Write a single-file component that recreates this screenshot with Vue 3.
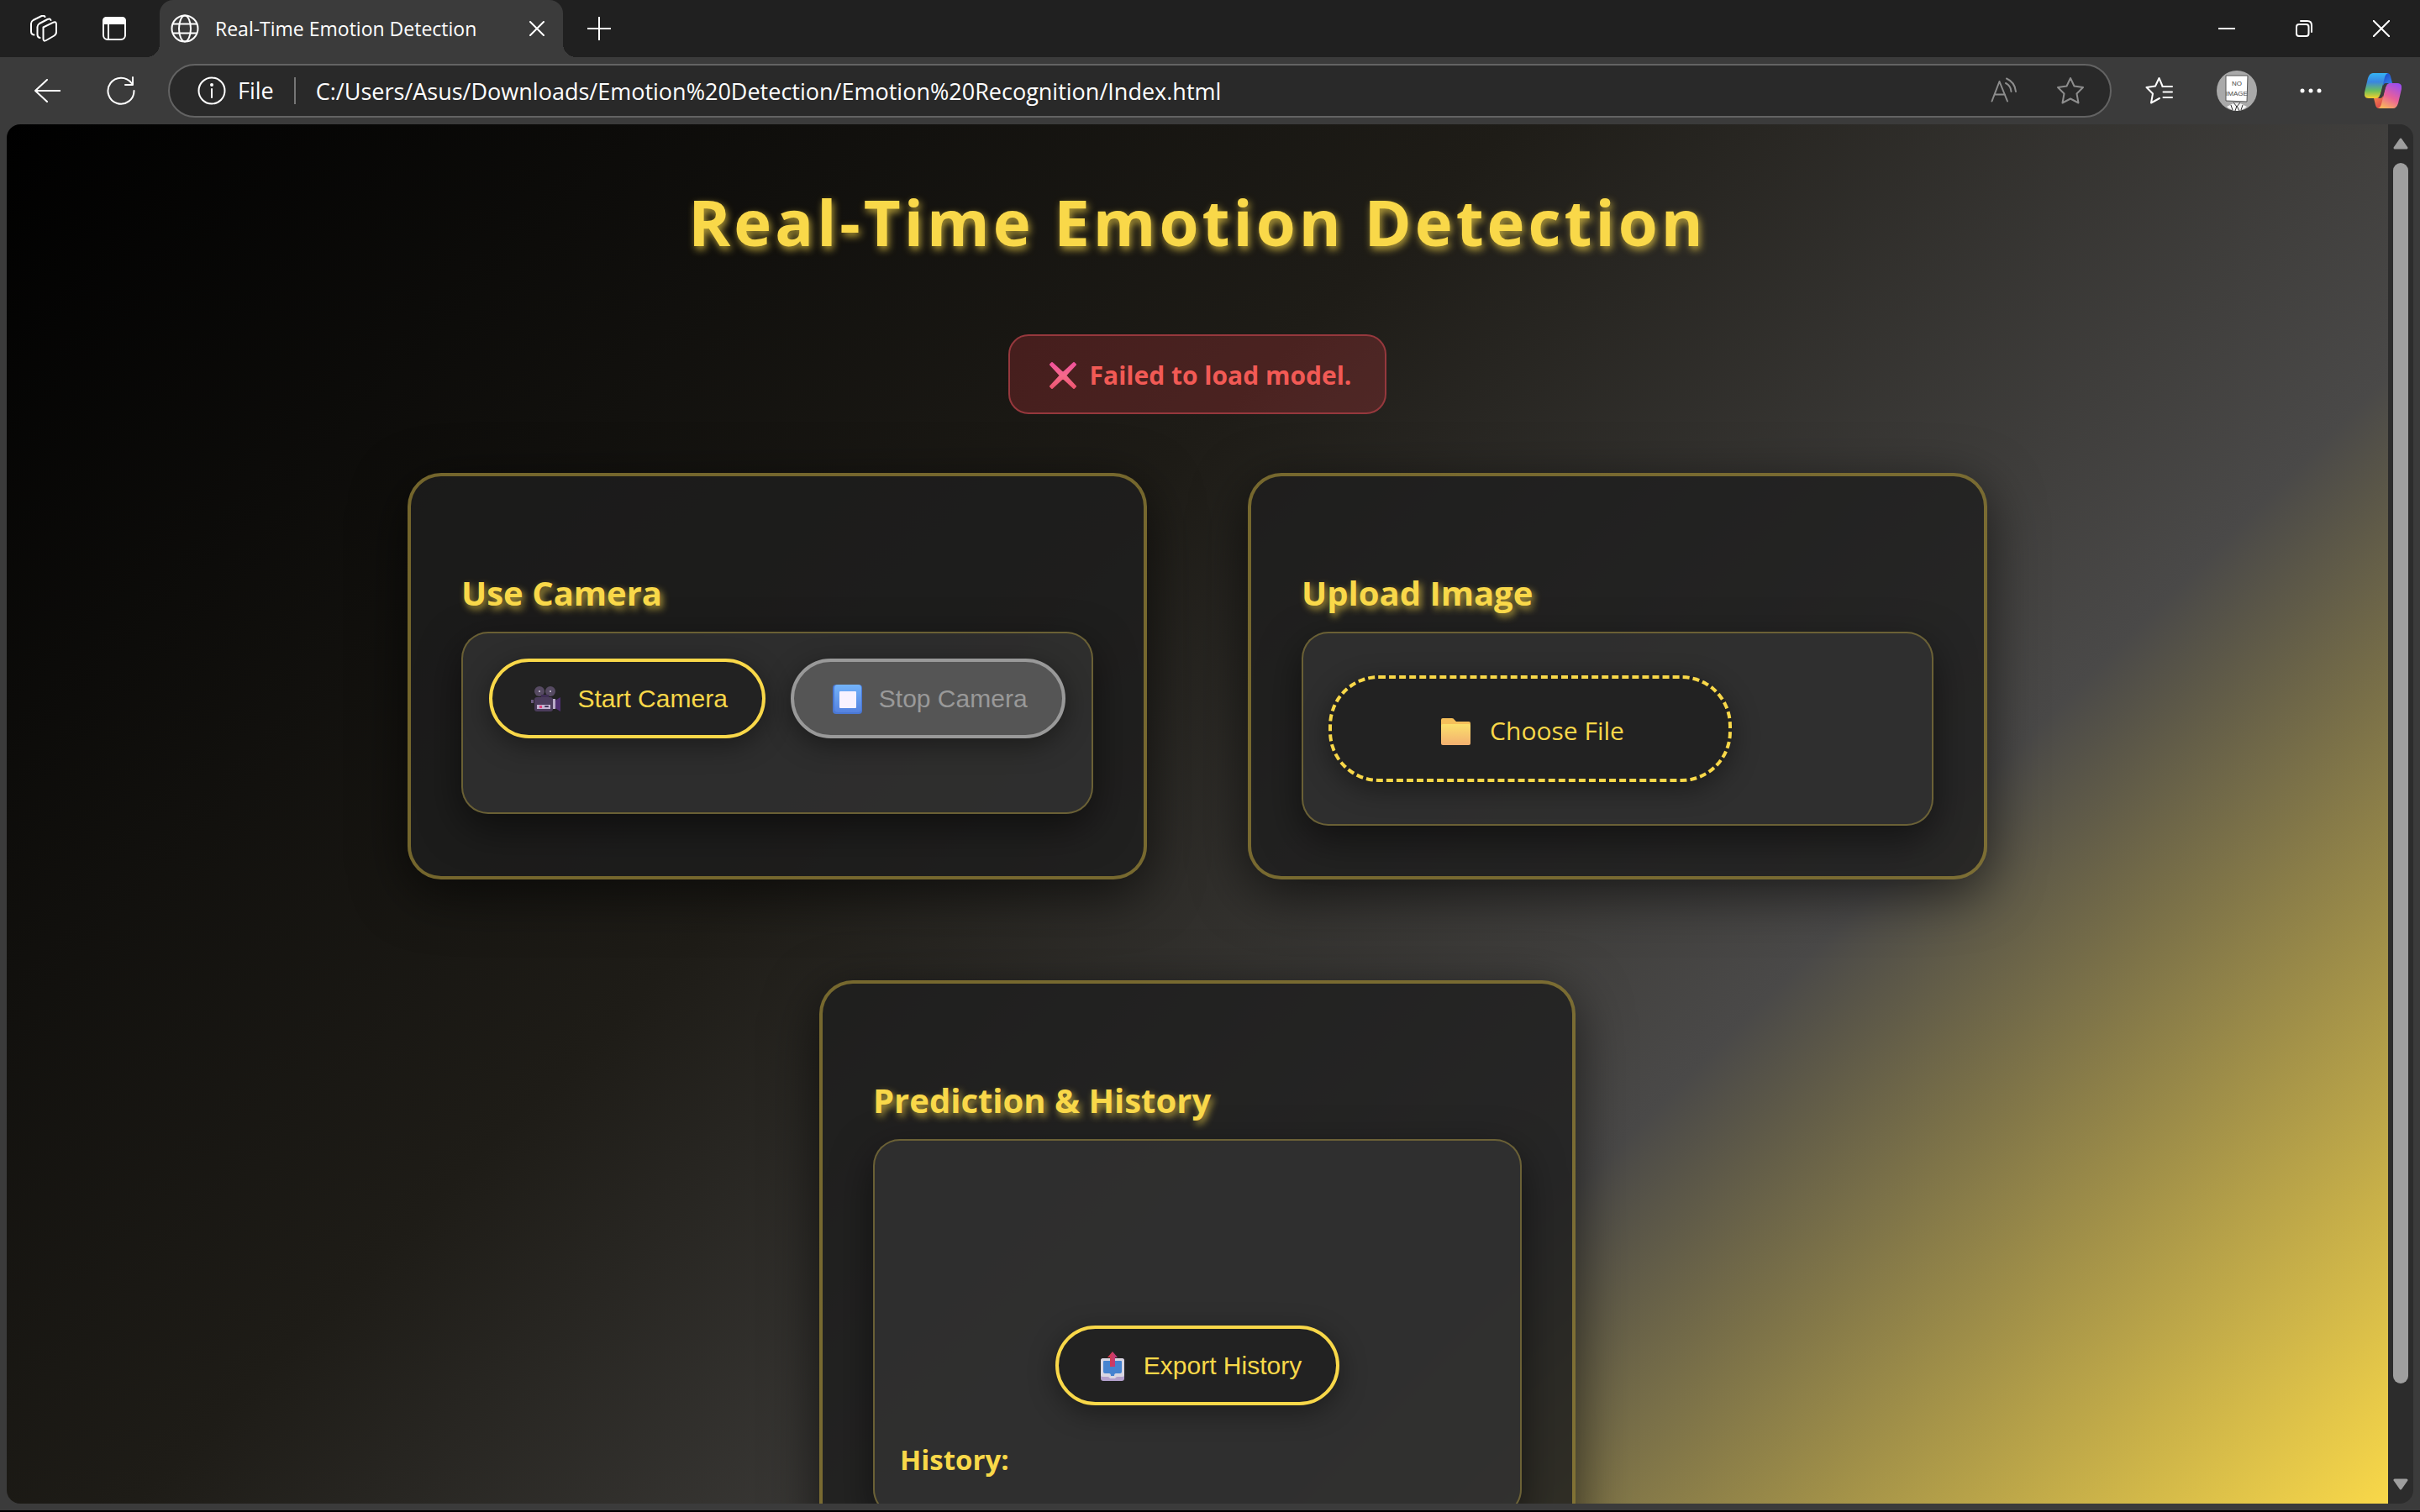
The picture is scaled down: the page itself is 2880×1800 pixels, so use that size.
<script setup>
import { ref } from 'vue'

const address = ref('C:/Users/Asus/Downloads/Emotion%20Detection/Emotion%20Recognition/Index.html')
</script>

<template>
  <div class="window">
    <header class="tabstrip">
      <button class="icon-btn workspaces" aria-label="Workspaces">
        <svg width="32" height="32" viewBox="0 0 32 32" class="line">
          <path d="M15.500 14.500 L27 8.800 Q31 7 31 11 V20 Q31 23 28.500 24.500 L19 30 Q15.500 32 15.500 28 Z" />
          <path d="M11.500 27 Q8.500 26.500 8.500 23 V14 Q8.500 11.500 11 10 L20.500 5 Q23.500 3.500 24.500 6" />
          <path d="M4.500 23.500 Q1 23 1 19.500 V10 Q1 7.500 3.500 6 L13.500 1 Q16.500 0 17.500 2" />
        </svg>
      </button>
      <button class="icon-btn tabs-menu" aria-label="Tab actions">
        <svg width="28" height="28" viewBox="0 0 28 28" class="line">
          <rect x="1" y="1" width="26" height="26" rx="5" />
          <path d="M1 8 V5 Q1 1 5 1 H23 Q27 1 27 5 V8 Z" fill="#fff" />
          <path d="M7 8 V27" />
        </svg>
      </button>
      <div class="tab">
        <svg width="34" height="34" viewBox="0 0 34 34" class="line">
          <circle cx="17" cy="17" r="15.500" />
          <ellipse cx="17" cy="17" rx="7" ry="15.500" />
          <path d="M3.500 11.500 H30.500 M3.500 22.500 H30.500" />
        </svg>
        <span class="tab-title">Real-Time Emotion Detection</span>
        <button class="icon-btn" aria-label="Close tab">
          <svg width="18" height="18" viewBox="0 0 18 18" class="line"><path d="M1 1 L17 17 M17 1 L1 17" /></svg>
        </button>
      </div>
      <button class="icon-btn new-tab" aria-label="New tab">
        <svg width="28" height="28" viewBox="0 0 28 28" class="line"><path d="M14 0 V28 M0 14 H28" /></svg>
      </button>
      <div class="window-controls">
        <button class="icon-btn" aria-label="Minimize">
          <svg width="20" height="20" viewBox="0 0 20 20" class="line"><path d="M0 10 H20" /></svg>
        </button>
        <button class="icon-btn" aria-label="Restore">
          <svg width="20" height="20" viewBox="0 0 20 20" class="line">
            <rect x="1" y="5" width="14.500" height="14" rx="3" />
            <path d="M6 1 H14 Q19 1 19 6 V14" />
          </svg>
        </button>
        <button class="icon-btn" aria-label="Close">
          <svg width="20" height="20" viewBox="0 0 20 20" class="line"><path d="M0.500 0.500 L19.500 19.500 M19.500 0.500 L0.500 19.500" /></svg>
        </button>
      </div>
    </header>

    <nav class="toolbar">
      <button class="icon-btn back" aria-label="Back">
        <svg width="32" height="28" viewBox="0 0 32 28" class="line"><path d="M32 14 H2 M16 1 L2 14 L16 27" /></svg>
      </button>
      <button class="icon-btn refresh" aria-label="Refresh">
        <svg width="34" height="34" viewBox="0 0 34 34" class="line"><path d="M32.500 17 A15.500 15.500 0 1 1 29.500 8 M31 1 V10 H22" /></svg>
      </button>
      <div class="address">
        <svg width="34" height="34" viewBox="0 0 34 34" class="line">
          <circle cx="17" cy="17" r="15.500" />
          <path d="M17 15 V25" />
          <circle cx="17" cy="10" r="1" fill="#fff" />
        </svg>
        <span class="scheme">File</span>
        <input v-model="address" class="url" type="text" aria-label="Address" spellcheck="false" />
        <button class="icon-btn dim" aria-label="Read aloud">
          <svg width="32" height="32" viewBox="0 0 32 32" class="line">
            <path d="M1.500 28.500 L10.500 5 L20 28.500 M4.500 20.500 H17" />
            <path d="M19 1.500 Q29 6 30 17 M18 7 Q24 10 24.500 17" />
          </svg>
        </button>
        <button class="icon-btn dim" aria-label="Add to favorites">
          <svg width="34" height="34" viewBox="0 0 34 34" class="line">
            <path d="M17 2 L21.500 11.500 L32 13 L24.500 20.500 L26.500 31.500 L17 26.500 L7.500 31.500 L9.500 20.500 L2 13 L12.500 11.500 Z" />
          </svg>
        </button>
      </div>
      <div class="tools">
        <button class="icon-btn" aria-label="Favorites">
          <svg width="34" height="34" viewBox="0 0 34 34" class="line">
            <path d="M20.500 11.500 L16.500 2 L12 11.500 L1.500 13 L9 20.500 L7 31.500 L17 26" />
            <path d="M20.500 12 H32 M21.500 18.500 H32 M21.500 25 H32" />
          </svg>
        </button>
        <button class="avatar" aria-label="Profile">
          <svg width="48" height="48" viewBox="0 0 48 48">
            <circle cx="24" cy="24" r="24" fill="#a9a9a9" />
            <path d="M12 43 L20 39 H28 L36 43 Q30 48 24 48 Q18 48 12 43 Z" fill="#f4f4f4" />
            <path d="M20 38 L24 43 L28 38 M24 42 L22 48 M24 42 L27 48 M17 41 L19 47 M31 41 L29 47" fill="none" stroke="#333" stroke-width="1" />
            <path d="M11 6 H37 L36 37 L11 36 Z" fill="#fff" stroke="#555" stroke-width="1" />
            <text x="24" y="18" class="avatar-text">NO</text>
            <text x="24" y="30" class="avatar-text">IMAGE</text>
          </svg>
        </button>
        <button class="icon-btn" aria-label="Settings and more">
          <svg width="26" height="6" viewBox="0 0 26 6" fill="#fff"><circle cx="3" cy="3" r="2.500" /><circle cx="13" cy="3" r="2.500" /><circle cx="23" cy="3" r="2.500" /></svg>
        </button>
        <button class="icon-btn" aria-label="Copilot">
          <svg width="44" height="42" viewBox="0 0 44 42">
            <defs>
              <linearGradient id="cpA" x1="0" y1="0" x2="0" y2="1"><stop offset="0" stop-color="#35b4f4" /><stop offset=".35" stop-color="#3a86e0" /><stop offset=".7" stop-color="#6cbf5c" /><stop offset="1" stop-color="#f5d02c" /></linearGradient>
              <linearGradient id="cpB" x1="0.800" y1="0" x2="0.300" y2="1"><stop offset="0" stop-color="#9a4df0" /><stop offset=".55" stop-color="#e8609a" /><stop offset="1" stop-color="#f9b45c" /></linearGradient>
              <linearGradient id="cpC" x1="0" y1="0" x2="1" y2="1"><stop offset="0" stop-color="#1a3fc4" /><stop offset="1" stop-color="#3f9bf5" /></linearGradient>
              <linearGradient id="cpD" x1="0" y1="0" x2="1" y2="1"><stop offset="0" stop-color="#fb9a4c" /><stop offset="1" stop-color="#d83a4c" /></linearGradient>
            </defs>
            <path d="M20 0 H27 Q30 0 31 4 L33 12 H40 L22 15 Z" fill="url(#cpC)" />
            <path d="M24 42 H17 Q14 42 13 38 L11 30 H4 L22 27 Z" fill="url(#cpD)" />
            <path d="M10 0 H28 Q25 1 24 5 L19 25 Q17 30 13 30 H5 Q-1 30 0 23 L4 6 Q6 0 10 0 Z" fill="url(#cpA)" />
            <path d="M34 42 H16 Q19 41 20 37 L25 17 Q27 12 31 12 H39 Q45 12 44 19 L40 36 Q38 42 34 42 Z" fill="url(#cpB)" />
            <path d="M25 12 H29 Q26 13 25 17 L22 27 Q21 30 18 30 H16 Q18 29 19 25 L22 15 Q23 12 25 12 Z" fill="#3b3b3b" />
          </svg>
        </button>
      </div>
    </nav>

    <div class="viewport">
      <main class="page">
        <h1>Real-Time Emotion Detection</h1>

        <p class="alert" role="alert">
          <svg width="34" height="34" viewBox="0 0 34 34">
            <defs><linearGradient id="cross" x1="0" y1="0" x2="0" y2="1"><stop offset="0" stop-color="#f0509a" /><stop offset=".5" stop-color="#f56a8c" /><stop offset="1" stop-color="#ee5570" /></linearGradient></defs>
            <path d="M4 2 L17 14 L30 2 L32 4 L20 17 L32 30 L30 32 L17 20 L4 32 L2 30 L14 17 L2 4 Z" fill="url(#cross)" stroke="url(#cross)" stroke-width="2" stroke-linejoin="round" />
          </svg>
          <span>Failed to load model.</span>
        </p>

        <div class="cards">
          <section class="card">
            <h2>Use Camera</h2>
            <div class="panel camera-panel">
              <button class="pill">
                <svg width="36" height="36" viewBox="0 0 36 36">
                  <path d="M3 23 H0 V19 H3 Z" fill="#6b5a80" />
                  <path d="M27 21 L35 16 V33 L27 28 Z" fill="#4f2f72" />
                  <circle cx="10" cy="9" r="6" fill="#564a62" /><circle cx="23" cy="9" r="6" fill="#564a62" />
                  <circle cx="10" cy="9" r="1" fill="#d8d0e4" /><circle cx="23" cy="9" r="1" fill="#d8d0e4" />
                  <rect x="12" y="13" width="9" height="4" fill="#3f2e55" />
                  <rect x="4" y="16" width="22" height="17" rx="3" fill="#4b3c5c" />
                  <path d="M26 18 H29 V30 H26 Z" fill="#b9abc9" />
                  <rect x="7" y="25" width="16" height="5" fill="#c3b3d2" />
                  <rect x="10" y="26" width="3" height="3" fill="#e0407c" />
                  <rect x="16" y="26" width="5" height="2" rx="1" fill="#42355a" />
                </svg>
                <span>Start Camera</span>
              </button>
              <button class="pill" disabled>
                <svg width="36" height="36" viewBox="0 -1 36 36">
                  <defs><linearGradient id="stop" x1="0" y1="0" x2="0" y2="1"><stop offset="0" stop-color="#73b4fa" /><stop offset="1" stop-color="#5582e0" /></linearGradient></defs>
                  <rect x="0" y="0" width="35" height="35" rx="4" fill="#4a78d4" />
                  <rect x="2" y="0" width="32" height="33" rx="4" fill="url(#stop)" />
                  <rect x="8" y="8" width="20" height="20" rx="1" fill="#f8f2ff" />
                </svg>
                <span>Stop Camera</span>
              </button>
            </div>
          </section>

          <section class="card">
            <h2>Upload Image</h2>
            <div class="panel upload-panel">
              <label class="file-drop" for="image-file">
                <svg width="36" height="36" viewBox="0 0 36 36">
                  <defs><linearGradient id="folder" x1="0" y1="0" x2="0" y2="1"><stop offset="0" stop-color="#fbe06c" /><stop offset="1" stop-color="#f3b070" /></linearGradient></defs>
                  <path d="M0 14 V5 Q0 3 2 3 H13 Q15 3 16 5 L18 7 H33 Q35 7 35 9 V14 Z" fill="#f5bf5a" />
                  <rect x="0" y="10" width="35" height="25" rx="2" fill="url(#folder)" />
                </svg>
                <span>Choose File</span>
              </label>
              <input id="image-file" class="file-input" type="file" accept="image/*" />
            </div>
          </section>

          <section class="card wide">
            <h2>Prediction &amp; History</h2>
            <div class="panel history-panel">
              <button class="pill export">
                <svg width="36" height="36" viewBox="0 0 36 36">
                  <defs><linearGradient id="arrow" x1="0" y1="0" x2="1" y2="0"><stop offset="0" stop-color="#e03a3e" /><stop offset="1" stop-color="#b83c8c" /></linearGradient></defs>
                  <rect x="4" y="9" width="28" height="27" rx="3" fill="#b3a0cc" />
                  <path d="M4 12 Q4 9 7 9 H29 Q32 9 32 12 V29 Q32 31 30 31 H24 Q22 31 21 33 H15 Q14 31 12 31 H6 Q4 31 4 29 Z" fill="#d9d6e2" />
                  <path d="M7 13 Q7 12 8 12 H28 Q29 12 29 13 V25 Q29 27 27 27 H22 Q20 27 20 30 H16 Q16 27 14 27 H9 Q7 27 7 25 Z" fill="#4683d0" />
                  <path d="M18 1 L24 8 H21 V19 H15 V8 H12 Z" fill="url(#arrow)" />
                </svg>
                <span>Export History</span>
              </button>
              <h3>History:</h3>
            </div>
          </section>
        </div>
      </main>
      <div class="scrollbar" aria-hidden="true">
        <svg width="18" height="14" viewBox="0 0 18 14"><path d="M9 2 L16 12 H2 Z" /></svg>
        <div class="track"><div class="thumb"></div></div>
        <svg width="18" height="14" viewBox="0 0 18 14"><path d="M9 12 L2 2 H16 Z" /></svg>
      </div>
    </div>
  </div>
</template>

<style>
body {
  background: #000;
}
</style>

<style scoped>
* {
  box-sizing: border-box;
}

.window {
  --ui: "Segoe UI", "Open Sans", "Noto Sans", sans-serif;
  --gold: #f9d849;
  display: flex;
  flex-direction: column;
  height: 100vh;
  border-bottom: 2px solid #000;
  background: #3b3b3b;
  color: #fff;
  font-family: var(--ui);
  overflow: hidden;
}

svg {
  display: block;
  flex: none;
}

.line {
  fill: none;
  stroke: currentColor;
  stroke-width: 2;
  stroke-linecap: round;
  stroke-linejoin: round;
}

.icon-btn,
.avatar {
  display: flex;
  padding: 0;
  border: 0;
  background: none;
  color: #fff;
}

/* Tab strip */
.tabstrip {
  display: flex;
  align-items: center;
  height: 68px;
  background: #202020;
}

.workspaces {
  margin-left: 36px;
}

.tabs-menu {
  margin-left: 54px;
}

.tab {
  position: relative;
  display: flex;
  align-items: center;
  width: 480px;
  height: 68px;
  margin-left: 40px;
  padding: 0 22px 0 13px;
  border-radius: 16px 16px 0 0;
  background: #3b3b3b;
}

.tab::before,
.tab::after {
  content: "";
  position: absolute;
  bottom: 0;
  width: 16px;
  height: 16px;
}

.tab::before {
  right: 100%;
  background: radial-gradient(circle at 0 0, #202020 16px, #3b3b3b 16px);
}

.tab::after {
  left: 100%;
  background: radial-gradient(circle at 100% 0, #202020 16px, #3b3b3b 16px);
}

.tab-title {
  flex: 1;
  margin-left: 19px;
  font-size: 23px;
  line-height: 32px;
  white-space: nowrap;
}

.new-tab {
  margin-left: 29px;
}

.window-controls {
  display: flex;
  gap: 72px;
  margin-left: auto;
  margin-right: 36px;
}

/* Toolbar */
.toolbar {
  display: flex;
  align-items: center;
  height: 80px;
}

.back {
  margin-left: 40px;
}

.refresh {
  margin-left: 55px;
}

.address {
  display: flex;
  flex: 1;
  align-items: center;
  height: 64px;
  margin-left: 39px;
  padding: 0 30px 0 33px;
  border: 2px solid #636363;
  border-radius: 32px;
  background: #292929;
}

.scheme {
  margin-left: 14px;
  padding-right: 24px;
  border-right: 2px solid #757575;
  font-size: 27px;
  line-height: 32px;
}

.url {
  flex: 1;
  min-width: 0;
  height: 40px;
  margin: 0 24px;
  padding: 0;
  border: 0;
  background: none;
  color: #fff;
  font-family: var(--ui);
  font-size: 27px;
  outline: none;
}

.dim {
  margin-left: 46px;
  color: #8d8d8d;
}

.tools {
  display: flex;
  align-items: center;
  gap: 51px;
  margin: 0 22px 0 40px;
}

.avatar-text {
  fill: #444;
  font-family: "Liberation Sans", sans-serif;
  font-size: 8px;
  text-anchor: middle;
}

/* Browser viewport */
.viewport {
  display: flex;
  flex: 1;
  min-height: 0;
  margin: 0 8px 8px;
  border-radius: 16px;
  overflow: hidden;
}

.page {
  flex: 1;
  padding: 58px 60px 0;
  background: linear-gradient(135deg, #000 0%, #1e1c17 40%, #4a4948 70%, #f9d849 100%);
  color: var(--gold);
  overflow: hidden;
}

h1 {
  margin: 0;
  font-size: 76px;
  line-height: 116px;
  letter-spacing: 4px;
  text-align: center;
  text-shadow: 2px 4px 10px rgba(249, 216, 73, 0.7);
}

.alert {
  display: flex;
  align-items: center;
  gap: 15px;
  width: fit-content;
  height: 95px;
  margin: 76px auto 70px;
  padding: 2px 40px 0 46px;
  border: 2px solid #96383d;
  border-radius: 24px;
  background: rgba(230, 57, 70, 0.22);
  color: #f25a55;
  font-size: 30px;
  font-weight: 700;
}

.cards {
  display: flex;
  flex-wrap: wrap;
  justify-content: center;
  gap: 120px;
  max-width: 2200px;
  margin: 0 auto;
}

.card {
  flex: 0 1 880px;
  padding: 110px 60px 60px;
  border: 4px solid rgba(249, 216, 73, 0.4);
  border-radius: 40px;
  background: rgba(30, 30, 30, 0.8);
  box-shadow: 0 16px 64px rgba(0, 0, 0, 0.6);
}

.wide {
  flex-basis: 900px;
}

h2 {
  margin: 0 0 18px;
  font-size: 40px;
  line-height: 57px;
  text-shadow: 3px 4px 8px rgba(249, 216, 73, 0.7);
}

.panel {
  padding: 30px;
  border: 2px solid rgba(249, 216, 73, 0.3);
  border-radius: 32px;
  background: rgba(50, 50, 50, 0.8);
  box-shadow: 0 16px 48px rgba(0, 0, 0, 0.5);
}

.camera-panel {
  display: flex;
  justify-content: center;
  gap: 30px;
  padding: 30px 24px 88px;
}

.upload-panel {
  padding: 50px 30px;
}

.history-panel {
  padding-top: 220px;
  padding-bottom: 40px;
}

.pill {
  display: flex;
  align-items: center;
  gap: 19px;
  height: 95px;
  padding: 0 41px 0 46px;
  border: 4px solid var(--gold);
  border-radius: 48px;
  background: #222;
  box-shadow: 0 8px 32px rgba(0, 0, 0, 0.4);
  color: var(--gold);
  font-family: "Liberation Sans", Arial, sans-serif;
  font-size: 30px;
  white-space: nowrap;
}

.pill:disabled {
  border-color: #999;
  background: #555;
  color: #999;
}

.export {
  margin: 0 auto;
}

.file-drop {
  display: flex;
  align-items: center;
  justify-content: center;
  gap: 22px;
  width: 480px;
  max-width: 100%;
  height: 127px;
  padding: 4px 0 0 6px;
  border: 4px dashed var(--gold);
  border-radius: 60px;
  background: #222;
  box-shadow: 0 8px 32px rgba(0, 0, 0, 0.4);
  font-size: 30px;
}

.file-input {
  display: none;
}

h3 {
  margin: 40px 0 0;
  font-size: 33px;
  line-height: 50px;
}

.scrollbar {
  display: flex;
  flex-direction: column;
  align-items: center;
  width: 30px;
  padding: 16px 0;
  background: #2c2c2c;
}

.scrollbar path {
  fill: #9f9f9f;
  stroke: #9f9f9f;
  stroke-width: 3;
  stroke-linejoin: round;
}

.track {
  flex: 1;
  width: 18px;
  padding: 16px 0 4px;
}

.thumb {
  height: 93%;
  border-radius: 9px;
  background: #9f9f9f;
}
</style>
